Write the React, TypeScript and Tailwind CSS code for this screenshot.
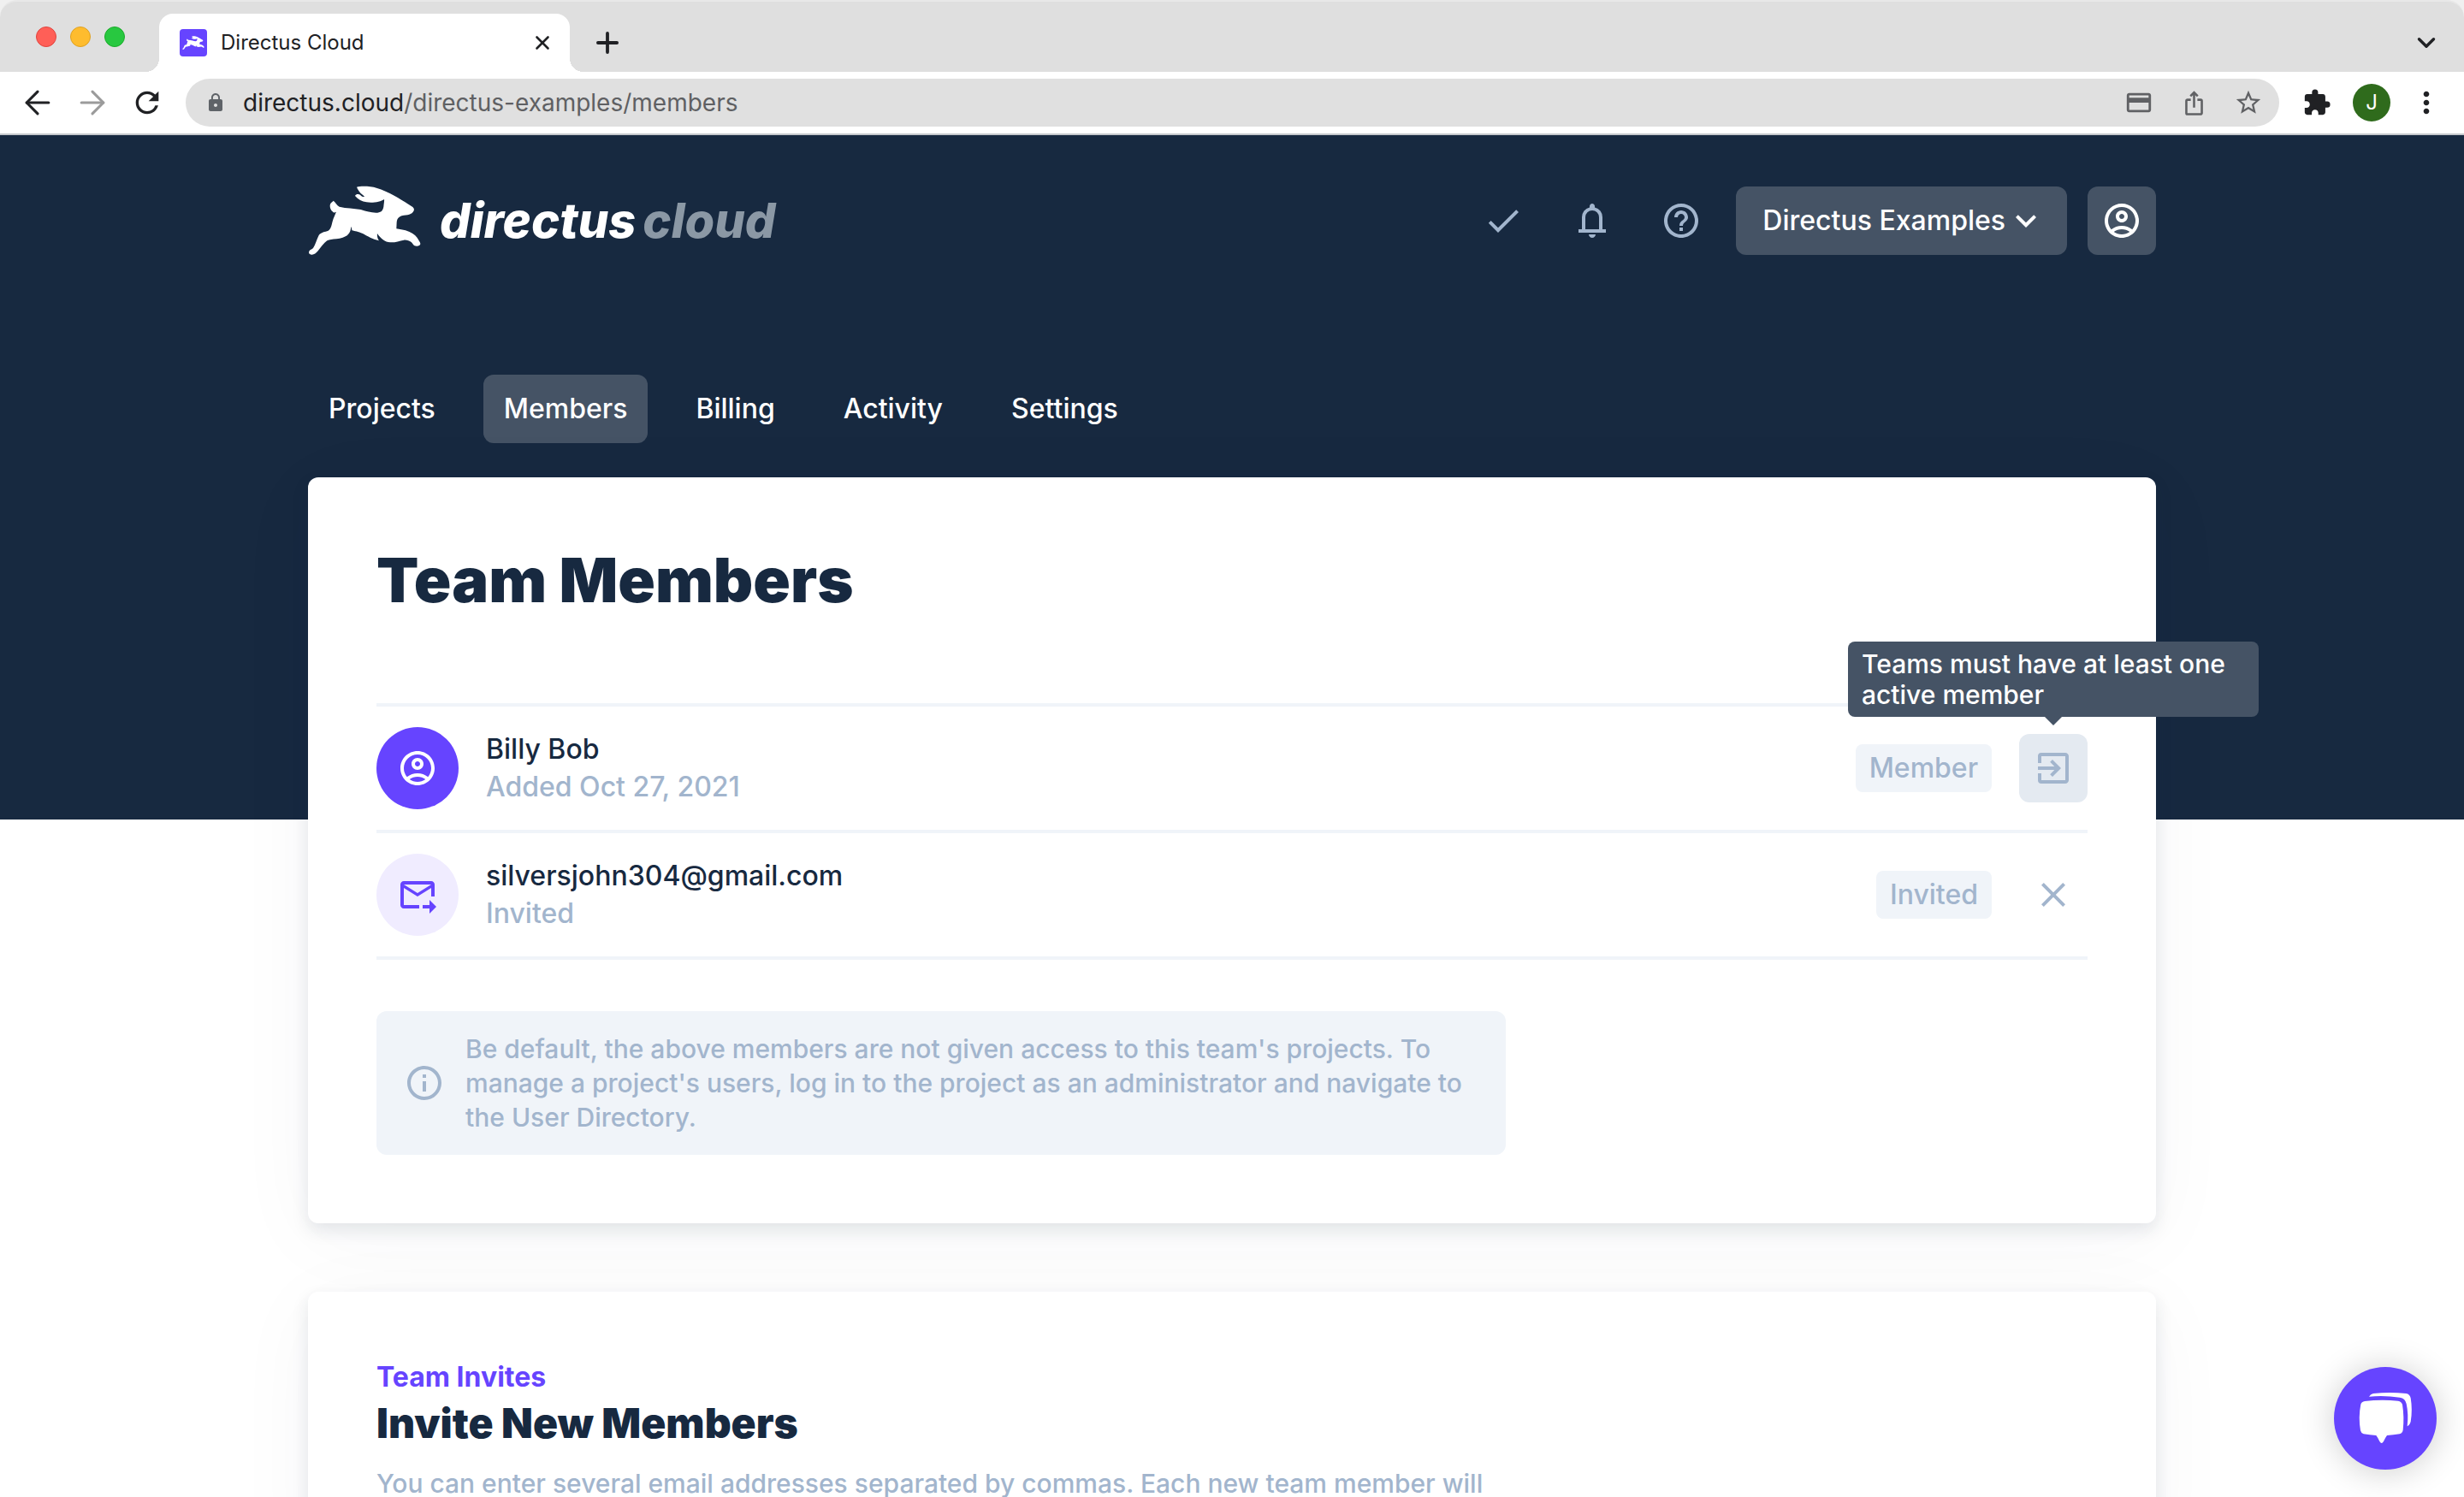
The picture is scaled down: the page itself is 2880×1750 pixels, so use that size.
import type { ReactNode } from "react";
import { ArrowLeft, ArrowRight, ChevronDown, Plus, X } from "lucide-react";
import {
  MdCheck,
  MdClose,
  MdExitToApp,
  MdExpandMore,
  MdExtension,
  MdHelpOutline,
  MdInfoOutline,
  MdIosShare,
  MdLock,
  MdMoreVert,
  MdOutlineAccountCircle,
  MdOutlineCreditCard,
  MdOutlineForwardToInbox,
  MdRefresh,
  MdStarBorder,
} from "react-icons/md";

function Rabbit({ className }: { className: string }) {
  return (
    <svg viewBox="30 36 396 246" className={className} fill="currentColor" aria-hidden="true">
      <path d="M201 41C215 37 250 38 270 44C315 58 350 80 383 102C393 108 402 113 402 120C399 134 385 140 366 140C350 142 342 150 341 165L340 187C352 190 362 190 372 193C392 199 405 208 413 219C418 228 425 236 424 241C423 247 413 250 404 247C399 244 396 238 392 234C385 229 376 226 366 227C350 230 335 236 318 235C300 234 285 222 273 204C272 212 273 220 279 229C255 223 240 214 222 204C205 197 195 196 184 193C184 188 183 183 181 179C180 190 178 200 170 208C160 218 145 221 130 223C115 224 105 226 97 229C85 238 75 252 65 265C58 274 50 279 42 278C33 277 32 271 34 266C36 261 44 260 48 255C56 244 60 225 68 210C75 199 90 198 101 194C112 187 113 170 117 158C120 148 124 140 129 128C124 131 120 132 116 127C107 120 105 105 109 99C112 94 117 92 119 89C126 94 131 105 140 110C165 116 190 115 215 120C235 126 250 131 268 131C285 131 292 125 295 110C296 98 298 90 297 84C285 93 255 98 235 94C220 92 205 84 195 72C198 66 206 65 213 68C217 73 222 76 228 75C226 70 214 64 210 57C208 52 203 48 201 41Z" />
    </svg>
  );
}

function Bell() {
  return (
    <svg viewBox="0 0 24 24" className="size-12" fill="currentColor" aria-hidden="true">
      <path d="M4 19v-2h2v-7q0-2.075 1.25-3.688Q8.5 4.7 10.5 4.2v-.7q0-.625.438-1.062Q11.375 2 12 2t1.062.438Q13.5 2.875 13.5 3.5v.7q2 .5 3.25 2.112Q18 7.925 18 10v7h2v2Zm8 3q-.825 0-1.412-.587Q10 20.825 10 20h4q0 .825-.587 1.413Q12.825 22 12 22Zm-4-5h8v-7q0-1.65-1.175-2.825Q13.65 6 12 6q-1.65 0-2.825 1.175Q8 8.35 8 10Z" />
    </svg>
  );
}

function IconButton({ label, className = "", children }: { label: string; className?: string; children: ReactNode }) {
  return (
    <button type="button" aria-label={label} className={`flex shrink-0 items-center justify-center ${className}`}>
      {children}
    </button>
  );
}

function BrowserChrome() {
  return (
    <div className="shrink-0 bg-[#f0f0f0] text-[#202124]">
      <div className="flex h-[84px] items-end rounded-t-[20px] border-t-2 border-[#e8e8e8] bg-[#dfdfdf]">
        <div className="flex h-full w-[186px] shrink-0 items-center gap-4 pl-[42px]">
          <span className="size-6 rounded-full border border-[#e0443e] bg-[#ff5f57]" />
          <span className="size-6 rounded-full border border-[#dea123] bg-[#febc2e]" />
          <span className="size-6 rounded-full border border-[#1aab29] bg-[#28c840]" />
        </div>
        <div className="relative flex h-[68px] w-[480px] shrink-0 items-center rounded-t-2xl bg-white pr-5 pl-6">
          <span className="absolute bottom-0 -left-4 size-4 bg-[radial-gradient(circle_at_0_0,#dfdfdf_16px,#ffffff_16px)]" />
          <span className="absolute -right-4 bottom-0 size-4 bg-[radial-gradient(circle_at_100%_0,#dfdfdf_16px,#ffffff_16px)]" />
          <span className="flex size-8 items-center justify-center rounded bg-[#6644ff] text-white">
            <Rabbit className="h-4 w-[26px]" />
          </span>
          <span className="ml-4 flex-1 text-[24px] leading-8">Directus Cloud</span>
          <IconButton label="Close tab" className="size-6">
            <X size={26} strokeWidth={2.4} className="shrink-0" />
          </IconButton>
        </div>
        <IconButton label="New tab" className="mb-[14px] ml-6 size-10">
          <Plus size={38} strokeWidth={2.4} />
        </IconButton>
        <IconButton label="Search tabs" className="mr-6 mb-[14px] ml-auto size-10">
          <ChevronDown size={34} strokeWidth={2.4} />
        </IconButton>
      </div>
      <div className="flex h-[74px] items-center border-b-2 border-[#c5c8cc] bg-white pr-6">
        <div className="flex w-[217px] shrink-0 items-center gap-5 pl-[22px]">
          <IconButton label="Back" className="size-11">
            <ArrowLeft size={44} strokeWidth={1.7} />
          </IconButton>
          <IconButton label="Forward" className="size-11 text-[#9b9b9b]">
            <ArrowRight size={44} strokeWidth={1.7} />
          </IconButton>
          <IconButton label="Reload" className="size-11">
            <MdRefresh size={40} />
          </IconButton>
        </div>
        <div className="flex h-14 flex-1 items-center rounded-full bg-[#e0e0e0] pr-4 pl-[23px] text-[#5f6368]">
          <MdLock size={24} className="shrink-0" />
          <div className="ml-5 flex-1 text-[28px] leading-9 text-[#5f6063]">
            <span className="text-[#202124]">directus.cloud</span>/directus-examples/members
          </div>
          <div className="flex items-center gap-6 text-[#606164]">
            <IconButton label="Saved cards" className="size-10">
              <MdOutlineCreditCard size={34} />
            </IconButton>
            <IconButton label="Share" className="size-10">
              <MdIosShare size={31} />
            </IconButton>
            <IconButton label="Bookmark" className="size-10">
              <MdStarBorder size={34} />
            </IconButton>
          </div>
        </div>
        <div className="ml-6 flex shrink-0 items-center gap-[22px]">
          <IconButton label="Extensions" className="size-10">
            <MdExtension size={34} />
          </IconButton>
          <IconButton label="Profile" className="size-11 rounded-full bg-[#2f6b1c] text-[24px] text-white">
            J
          </IconButton>
          <IconButton label="Menu" className="size-10">
            <MdMoreVert size={40} />
          </IconButton>
        </div>
      </div>
    </div>
  );
}

const navItems = ["Projects", "Members", "Billing", "Activity", "Settings"];

function SiteHeader() {
  return (
    <header className="bg-[#172940] pt-[60px] pb-[440px] text-white">
      <div className="mx-auto w-3/4">
        <div className="flex h-20 items-center">
          <a href="#home" className="flex items-center gap-[22px]">
            <Rabbit className="h-[82px] w-[132px]" />
            <span className="flex gap-2 text-[56px] leading-[72px] font-extrabold italic">
              <span>directus</span>
              <span className="text-[#8b98a5]">cloud</span>
            </span>
          </a>
          <div className="ml-auto flex items-center gap-6 text-[#a2b5cd]">
            <IconButton label="Status" className="size-20">
              <MdCheck size={48} />
            </IconButton>
            <IconButton label="Notifications" className="size-20">
              <Bell />
            </IconButton>
            <IconButton label="Help" className="size-20">
              <MdHelpOutline size={48} />
            </IconButton>
            <button
              type="button"
              className="flex h-20 items-center rounded-xl bg-[#455365] pr-6 pl-[31px] text-[32px] font-medium text-white"
            >
              Directus Examples
              <MdExpandMore size={48} />
            </button>
            <IconButton label="Account" className="size-20 rounded-xl bg-[#455365] text-white">
              <MdOutlineAccountCircle size={48} />
            </IconButton>
          </div>
        </div>
        <nav className="mt-[140px] flex gap-8 text-[32px] font-medium">
          {navItems.map((item) => (
            <a
              key={item}
              href={`#${item.toLowerCase()}`}
              className={`flex h-20 items-center rounded-xl px-6 ${item === "Members" ? "bg-[#455365]" : ""}`}
            >
              {item}
            </a>
          ))}
        </nav>
      </div>
    </header>
  );
}

function MemberRow({
  icon,
  avatarClass,
  name,
  detail,
  badge,
  action,
}: {
  icon: ReactNode;
  avatarClass: string;
  name: string;
  detail: string;
  badge: string;
  action: ReactNode;
}) {
  return (
    <li className="flex h-[148px] items-center border-b-4 border-[#f0f4f9] text-[32px] leading-[44px] font-medium">
      <span className={`flex size-24 items-center justify-center rounded-full ${avatarClass}`}>{icon}</span>
      <div className="ml-8 flex-1">
        <div>{name}</div>
        <div className="text-[#a2b5cd]">{detail}</div>
      </div>
      <span className="rounded-lg bg-[#f0f4f9] px-4 py-[6px] text-[#a2b5cd]">{badge}</span>
      <div className="relative ml-8">{action}</div>
    </li>
  );
}

function Tooltip() {
  return (
    <div
      role="tooltip"
      className="absolute bottom-full left-1/2 z-10 mb-5 w-[480px] -translate-x-1/2 rounded-lg bg-[#455365] px-4 py-2 text-[30px] leading-9 font-medium text-white"
    >
      Teams must have at least one active member
      <span className="absolute top-full left-1/2 -translate-x-1/2 border-x-[10px] border-t-[10px] border-x-transparent border-t-[#455365]" />
    </div>
  );
}

const cardClass =
  "rounded-xl bg-white p-20 shadow-[0_8px_20px_rgba(23,41,64,0.11),0_16px_100px_rgba(23,41,64,0.04)]";

export default function App() {
  return (
    <div className="flex h-screen flex-col overflow-hidden bg-white font-['Inter',sans-serif] text-[#172940]">
      <BrowserChrome />
      <div className="relative flex-1">
        <SiteHeader />
        <main className="relative mx-auto -mt-[400px] flex w-3/4 flex-col gap-20">
          <section className={cardClass}>
            <h1 className="text-[72px] leading-20 font-black">Team Members</h1>
            <ul className="mt-[104px] border-t-4 border-[#f0f4f9]">
              <MemberRow
                icon={<MdOutlineAccountCircle size={48} />}
                avatarClass="bg-[#6644ff] text-white"
                name="Billy Bob"
                detail="Added Oct 27, 2021"
                badge="Member"
                action={
                  <>
                    <IconButton label="Leave team" className="size-20 rounded-xl bg-[#e4eaf1] text-[#a2b5cd]">
                      <MdExitToApp size={48} />
                    </IconButton>
                    <Tooltip />
                  </>
                }
              />
              <MemberRow
                icon={<MdOutlineForwardToInbox size={48} />}
                avatarClass="bg-[#f0ecff] text-[#6644ff]"
                name="silversjohn304@gmail.com"
                detail="Invited"
                badge="Invited"
                action={
                  <IconButton label="Cancel invite" className="size-20 text-[#a2b5cd]">
                    <MdClose size={48} />
                  </IconButton>
                }
              />
            </ul>
            <div className="mt-[60px] flex max-w-[1320px] items-center gap-6 rounded-xl bg-[#f0f4f9] py-6 pr-10 pl-8 text-[30px] leading-10 font-medium text-[#a2b5cd]">
              <MdInfoOutline size={48} className="shrink-0" />
              <p>
                Be default, the above members are not given access to this team's projects. To manage a project's users,
                log in to the project as an administrator and navigate to the User Directory.
              </p>
            </div>
          </section>
          <section className={cardClass}>
            <div className="text-[32px] leading-10 font-bold text-[#6644ff]">Team Invites</div>
            <h2 className="mt-1 text-[48px] leading-[60px] font-black">Invite New Members</h2>
            <p className="mt-5 max-w-[1320px] text-[30px] leading-10 font-medium text-[#a2b5cd]">
              You can enter several email addresses separated by commas. Each new team member will
            </p>
          </section>
        </main>
      </div>
      <IconButton
        label="Open chat"
        className="fixed right-8 bottom-8 size-[120px] rounded-full bg-[#6644ff] text-white shadow-[0_2px_40px_rgba(0,0,0,0.2)]"
      >
        <svg viewBox="264 174 360 360" className="size-[120px]" fill="currentColor" aria-hidden="true">
          <path d="M358 305Q361 296 372 294Q430 287 489 293Q501 295 504 306Q511 350 506 395Q504 406 494 409Q472 413 450 414Q444 422 438 435Q431 447 424 435Q418 422 412 414Q390 413 368 409Q359 406 357 397Q349 350 358 305Z" />
          <path d="M387 278Q392 269 402 267Q460 261 517 267Q530 269 533 283Q540 325 533 366Q529 379 521 382Q526 340 518 303Q514 284 495 281Q441 273 387 278Z" />
        </svg>
      </IconButton>
    </div>
  );
}
